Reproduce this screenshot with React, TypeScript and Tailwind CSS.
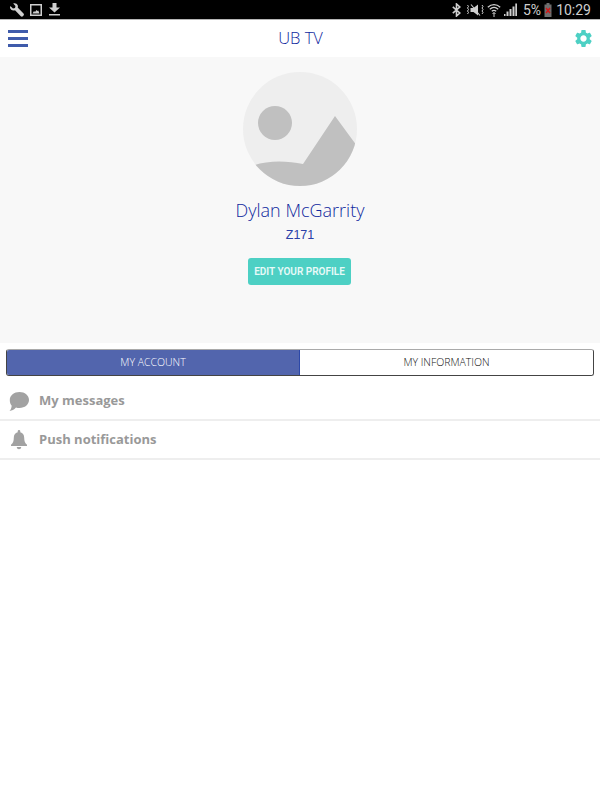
const font = "font-['Open_Sans',sans-serif]";
const roboto = "font-['Roboto',sans-serif]";

function StatusBar() {
  return (
    <div className="flex h-5 items-center justify-between border-b border-[#b5b5b5] bg-black pl-[10px] pr-[9px] text-[#cfcfcf]">
      <div className="flex items-center">
        <svg width="14" height="14" viewBox="0 0 14 14" fill="#cfcfcf">
          <path d="M.6 3.200L3 5.500l2-.5.500-2L3.200.6C5-.2 7 .6 7.700 2.300c.3.800.3 1.600 0 2.300l5.800 5.900c.6.600.6 1.500 0 2.100l-.6.600c-.6.600-1.500.6-2.100 0L5 7.300c-2.600 1-5.300-1-5-3.600 0-.2.300-.4.600-.5z" />
        </svg>
        <svg className="ml-[6px]" width="12" height="12" viewBox="0 0 12 12" fill="#cfcfcf">
          <path fillRule="evenodd" d="M0 0h12v12H0zM1.500 1.500v9h9v-9z" />
          <path d="M2.500 9.500l1.500-2.500 1 1 1.500-2 1 1 .800-.500 1.200 3z" />
        </svg>
        <svg className="ml-[7px]" width="11" height="13" viewBox="0 0 11 13" fill="#cfcfcf">
          <path d="M3.500 0h4v4.500H11L5.500 9.500 0 4.500h3.500zM0 11h11v1.500H0z" />
        </svg>
      </div>
      <div className="flex items-center gap-[3px]">
        <svg width="9" height="14" viewBox="0 0 9 14" fill="none" stroke="#cfcfcf" strokeWidth="1.600">
          <path d="M.8 3.800l7 6.200-3.300 3V1l3.300 3-7 6.200" />
        </svg>
        <svg className="ml-[2px]" width="18" height="14" viewBox="0 0 18 14" fill="#cfcfcf">
          <path d="M4.500 5h3L12 1.500v11L7.500 9h-3z" />
          <path d="M1.500 2l1 1.500-1 1.500 1 1.500-1 1.500 1 1.500-1 1.500M16 2l1 1.500-1 1.500 1 1.500-1 1.500 1 1.500-1 1.500" fill="none" stroke="#cfcfcf" />
          <path d="M5 1.500l9 11" stroke="#cfcfcf" strokeWidth="1.100" />
        </svg>
        <svg width="14" height="14" viewBox="0 0 14 14" fill="none" stroke="#cfcfcf" strokeWidth="1.300">
          <path d="M.8 4.200C4.500.8 9.500.8 13.200 4.200M2.800 6.300c2.600-2.300 5.800-2.300 8.400 0M4.800 8.300c1.400-1.200 3-1.200 4.400 0" />
          <path d="M7 9.500v4.500M5.500 11l1.500-1.500L8.500 11" strokeWidth="1" />
        </svg>
        <svg width="13" height="13" viewBox="0 0 13 13" fill="#cfcfcf">
          <path d="M0 13h1.500v-2H0zM2.500 13h2V8.500h-2zM5.500 13h2V6h-2zM8.500 13h2V3.500h-2zM11.300 13H13V.5h-1.700z" />
        </svg>
        <span className={`ml-[3px] ${roboto} text-[14px] leading-none`}>5%</span>
        <svg width="8" height="14" viewBox="0 0 8 14">
          <path d="M2.500 0h3v1.500h2V14H.5V1.500h2z" fill="#6e6e6e" />
          <path d="M2 5l4 5M6 5l-4 5" stroke="#d01818" strokeWidth="1.500" />
        </svg>
        <span className={`ml-[1px] ${roboto} text-[14px] leading-none`}>10:29</span>
      </div>
    </div>
  );
}

function Avatar() {
  return (
    <svg width="114" height="114" viewBox="0 0 114 114">
      <defs>
        <clipPath id="avatar-clip">
          <circle cx="57" cy="57" r="57" />
        </clipPath>
      </defs>
      <circle cx="57" cy="57" r="57" fill="#eeeeee" />
      <circle cx="32" cy="51" r="17" fill="#c0c0c0" />
      <g clipPath="url(#avatar-clip)" fill="#c0c0c0">
        <path d="M92 44L114 74V114H0V99C15 88 40 88 60 92Z" />
      </g>
    </svg>
  );
}

function Row({ icon, label }: { icon: React.ReactNode; label: string }) {
  return (
    <div className="flex h-[39px] items-center border-b-2 border-[#eeeeee] pl-[9px]">
      <div className="flex w-[20px] justify-center">{icon}</div>
      <span className="ml-[10px] text-[13px] font-bold text-[#999999]">{label}</span>
    </div>
  );
}

export default function App() {
  return (
    <div className={`flex h-[800px] w-[600px] flex-col overflow-hidden bg-white ${font}`}>
      <StatusBar />
      <header className="flex h-[37px] items-center justify-between pl-2 pr-[6px]">
        <div className="flex w-5 flex-col gap-[4px]">
          <div className="h-[3px] bg-[#3f5bab]" />
          <div className="h-[3px] bg-[#3f5bab]" />
          <div className="h-[3px] bg-[#3f5bab]" />
        </div>
        <span className="text-[16.500px] font-light text-[#10289e]">UB TV</span>
        <svg width="21" height="21" viewBox="0 0 24 24" fill="#4dd0c4">
          <path d="M19.140 12.940c.04-.3.06-.61.06-.94 0-.32-.02-.64-.07-.94l2.030-1.580c.18-.14.23-.41.12-.61l-1.920-3.320c-.12-.22-.37-.29-.59-.22l-2.390.96c-.5-.38-1.030-.7-1.620-.94l-.36-2.540c-.04-.24-.24-.41-.48-.41h-3.840c-.24 0-.43.17-.47.41l-.36 2.540c-.59.24-1.130.57-1.620.94l-2.390-.96c-.22-.08-.47 0-.59.22L2.740 8.870c-.12.21-.08.47.12.61l2.030 1.580c-.05.3-.09.63-.09.94s.02.64.07.94l-2.030 1.580c-.18.14-.23.41-.12.61l1.920 3.320c.12.22.37.29.59.22l2.390-.96c.5.38 1.030.7 1.620.94l.36 2.540c.05.24.24.41.48.41h3.840c.24 0 .44-.17.47-.41l.36-2.540c.59-.24 1.130-.56 1.620-.94l2.390.96c.22.08.47 0 .59-.22l1.920-3.320c.12-.22.07-.47-.12-.61l-2.010-1.580zM12 15.600c-1.980 0-3.600-1.620-3.600-3.600s1.620-3.600 3.600-3.600 3.600 1.620 3.600 3.600-1.620 3.600-3.600 3.600z" />
        </svg>
      </header>
      <section className="flex h-[286px] flex-col items-center bg-[#f8f8f8] pt-[15px]">
        <Avatar />
        <div className="mt-[12px] text-[18px] font-light leading-[25px] text-[#10289e]">Dylan McGarrity</div>
        <div className="mt-[3px] font-['Liberation_Sans',sans-serif] text-[12.500px] leading-[18px] text-[#2a40a8]">Z171</div>
        <button className={`mr-[1px] mt-[14px] h-[27px] w-[103px] rounded-[3px] bg-[#4dd0c4] ${roboto} text-[10px] font-semibold text-[#e8faf8]`}>
          EDIT YOUR PROFILE
        </button>
      </section>
      <div className="mx-[6px] mt-[6px] flex h-[27px] overflow-hidden rounded-[3px] border border-[#444] border-t-[#aaa] text-[10.500px] font-light">
        <div className="flex w-[292px] items-center justify-center bg-[#5265ad] text-white">MY ACCOUNT</div>
        <div className="flex flex-1 items-center justify-center border-l border-[#2c48a8] bg-white text-[#111]">MY INFORMATION</div>
      </div>
      <div className="mt-[6px]">
        <Row
          icon={
            <svg width="20" height="20" viewBox="0 0 20 20" fill="#a2a2a2">
              <path d="M10.500 1C15.800 1 20 4.400 20 9c0 4.400-4.200 8-9.500 8-1.300 0-2.400-.2-3.500-.6C5 18.500 3 19.500.500 20c1.300-1.300 2-3 2.200-5.300C1.400 13.300.800 11.300.800 9 .800 4.400 5.200 1 10.500 1z" />
            </svg>
          }
          label="My messages"
        />
        <Row
          icon={
            <svg width="16" height="20" viewBox="0 0 16 20" fill="#a2a2a2">
              <path d="M8 0c.8 0 1.300.6 1.300 1.400v.8c2.600.6 3.900 2.700 3.900 5.600 0 3.600.8 5.300 2.800 7V16H0v-1.200c2-1.700 2.800-3.400 2.800-7 0-2.900 1.300-5 3.900-5.600v-.8C6.700.6 7.200 0 8 0zM5.800 17h4.400c0 1.300-1 2.300-2.200 2.300S5.800 18.300 5.800 17z" />
            </svg>
          }
          label="Push notifications"
        />
      </div>
    </div>
  );
}
